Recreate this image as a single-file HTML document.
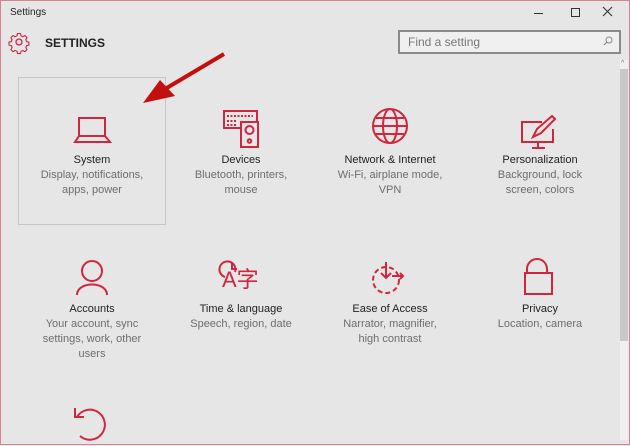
<!DOCTYPE html>
<html><head><meta charset="utf-8"><style>
*{margin:0;padding:0;box-sizing:border-box}
body{width:630px;height:445px;overflow:hidden;background:#e6e6e6;font-family:"Liberation Sans",sans-serif;position:relative}
.frame{position:absolute;left:0;top:0;width:630px;height:445px;border:1px solid #d9828f;}
.t{position:absolute;color:#222;font-size:11px;text-align:center;width:150px;line-height:15px}
.s{color:#6d6d6d}
svg{position:absolute;overflow:visible}
</style></head><body>
<div style="position:absolute;left:10px;top:7px;font-size:10px;color:#222">Settings</div>
<div style="position:absolute;left:534px;top:13px;width:9px;height:1px;background:#333"></div>
<div style="position:absolute;left:571px;top:8px;width:9px;height:9px;border:1px solid #333"></div>
<svg width="10" height="10" style="left:603px;top:7px"><path d="M0 0L9 9M9 0L0 9" stroke="#333" stroke-width="1.1"/></svg>
<svg width="20" height="20" style="left:9px;top:32px" viewBox="0 0 20 20"><circle cx="10" cy="10" r="3" fill="none" stroke="#d1263f" stroke-width="1.3"/><path d="M8.5 1.5h3l.5 2.3 1.8.9 2.1-1.2 2.1 2.1-1.2 2.1.8 1.9 2.3.5v3l-2.3.5-.8 1.9 1.2 2.1-2.1 2.1-2.1-1.2-1.8.8-.5 2.3h-3l-.5-2.3-1.9-.8-2.1 1.2-2.1-2.1 1.2-2.1-.8-1.9-2.3-.5v-3l2.3-.5.8-1.9-1.2-2.1 2.1-2.1 2.1 1.2 1.9-.9z" fill="none" stroke="#d1263f" stroke-width="1.1"/></svg>
<div style="position:absolute;left:45px;top:36px;font-size:12px;font-weight:bold;color:#222">SETTINGS</div>
<div style="position:absolute;left:398px;top:30px;width:223px;height:24px;border:2px solid #8a8a8a;background:#f0f0f0;font-size:12px;color:#777;padding:3px 0 0 8px">Find a setting</div>
<svg width="10" height="10" style="left:603px;top:36px"><circle cx="6" cy="4" r="3" fill="none" stroke="#888"/><path d="M4 6L1 9" stroke="#888"/></svg>
<div style="position:absolute;left:620px;top:60px;width:8px;height:380px;background:#f0f0f0"></div>
<div style="position:absolute;left:620px;top:69px;width:8px;height:272px;background:#c8c8c8"></div>
<div style="position:absolute;left:621px;top:60px;font-size:7px;color:#777">^</div>
<div style="position:absolute;left:18px;top:77px;width:148px;height:148px;border:1px solid #c6c6c6"></div>
<svg width="630" height="445" style="left:0;top:0" viewBox="0 0 630 445"><path d="M224 54L165 89" stroke="#c40f0f" stroke-width="4"/><path d="M143 103L160 80L175 96Z" fill="#c40f0f"/></svg>
<svg width="40" height="40" style="left:74px;top:116px" viewBox="0 0 40 40" fill="none" stroke="#d1263f" stroke-width="2"><rect x="5" y="2" width="26" height="18"/><path d="M5 20L1 26H36L31 20"/></svg>
<svg width="40" height="40" style="left:222px;top:109px" viewBox="0 0 40 40" fill="none" stroke="#d1263f" stroke-width="2"><path d="M19 19H2V2H35V13"/><rect x="19" y="13" width="17" height="25"/><circle cx="27.5" cy="21" r="4"/><circle cx="27.5" cy="32" r="1.8"/><path d="M5 7h26M5 12h9M5 16h9" stroke-dasharray="2 1.5"/></svg>
<svg width="40" height="40" style="left:372px;top:108px" viewBox="0 0 40 40" fill="none" stroke="#d1263f" stroke-width="2"><circle cx="18" cy="18" r="17"/><ellipse cx="18" cy="18" rx="7" ry="17"/><path d="M1 18H35M4 10H32M4 26H32"/></svg>
<svg width="40" height="40" style="left:520px;top:114px" viewBox="0 0 40 40" fill="none" stroke="#d1263f" stroke-width="2"><path d="M22 8H2V28H33V15"/><path d="M18 28V33M12 34H25"/><path d="M13 23L17 15L32 2L35 5L21 19Z"/></svg>
<svg width="40" height="40" style="left:74px;top:259px" viewBox="0 0 40 40" fill="none" stroke="#d1263f" stroke-width="2"><circle cx="18" cy="12" r="10"/><path d="M3 36C3 22 33 22 33 36"/></svg>
<svg width="40" height="40" style="left:222px;top:260px" viewBox="0 0 40 40" fill="none" stroke="#d1263f" stroke-width="2"><path d="M13 12A8 8 0 1 0 3 17"/><path d="M10 2V9H15"/></svg>
<div style="position:absolute;left:222px;top:268px;font-size:22px;color:#d1263f;font-family:'Liberation Sans','Noto Sans CJK SC',sans-serif;line-height:24px">A字</div>
<svg width="40" height="40" style="left:370px;top:260px" viewBox="0 0 40 40" fill="none" stroke="#d1263f" stroke-width="2"><circle cx="16" cy="20" r="13" stroke-dasharray="5 3"/><path d="M16 2V18M11 13L16 18L21 13M22 16H33M30 13L33 16L30 19"/></svg>
<svg width="40" height="40" style="left:522px;top:259px" viewBox="0 0 40 40" fill="none" stroke="#d1263f" stroke-width="2"><path d="M5 14V10A10 10 0 0 1 25 10V14"/><rect x="3" y="14" width="27" height="21"/></svg>
<svg width="40" height="40" style="left:72px;top:406px" viewBox="0 0 40 40" fill="none" stroke="#d1263f" stroke-width="2"><path d="M5 11A15 15 0 1 1 8 30"/><path d="M3 2V11H12"/></svg>
<div class="t" style="left:17px;top:153px">System<div class="s">Display, notifications,<br>apps, power</div></div>
<div class="t" style="left:166px;top:153px">Devices<div class="s">Bluetooth, printers,<br>mouse</div></div>
<div class="t" style="left:315px;top:153px">Network &amp; Internet<div class="s">Wi-Fi, airplane mode,<br>VPN</div></div>
<div class="t" style="left:465px;top:153px">Personalization<div class="s">Background, lock<br>screen, colors</div></div>
<div class="t" style="left:17px;top:302px">Accounts<div class="s">Your account, sync<br>settings, work, other<br>users</div></div>
<div class="t" style="left:166px;top:302px">Time &amp; language<div class="s">Speech, region, date</div></div>
<div class="t" style="left:315px;top:302px">Ease of Access<div class="s">Narrator, magnifier,<br>high contrast</div></div>
<div class="t" style="left:465px;top:302px">Privacy<div class="s">Location, camera</div></div>
<div class="frame"></div>
</body></html>
